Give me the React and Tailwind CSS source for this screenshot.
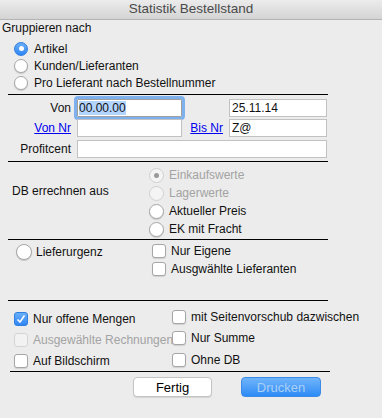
import React from "react";

const font = { fontFamily: '"Liberation Sans", Arial, sans-serif' };

const Radio = ({ checked, disabled, size = "w-[15px] h-[15px]" }) => (
  <span
    className={`${size} shrink-0 rounded-full flex items-center justify-center border ${
      checked && !disabled
        ? "bg-gradient-to-b from-[#68aef9] to-[#2f86f4] border-[#2f7fe0]"
        : disabled
        ? "bg-[#f4f4f4] border-[#d0d0d0]"
        : "bg-white border-[#a6a6a6] shadow-[0_1px_1px_rgba(0,0,0,0.15)]"
    }`}
  >
    {checked && (
      <span
        className={`w-[5px] h-[5px] rounded-full ${
          disabled ? "bg-[#9a9a9a]" : "bg-white"
        }`}
      />
    )}
  </span>
);

const Check = ({ checked, disabled }) => (
  <span
    className={`w-[14px] h-[14px] shrink-0 rounded-[3px] border flex items-center justify-center ${
      checked
        ? "bg-gradient-to-b from-[#68aef9] to-[#2f86f4] border-[#2f7fe0]"
        : disabled
        ? "bg-[#f2f2f2] border-[#d4d4d4]"
        : "bg-white border-[#a6a6a6] shadow-[0_1px_1px_rgba(0,0,0,0.12)]"
    }`}
  >
    {checked && (
      <svg width="10" height="10" viewBox="0 0 10 10">
        <path d="M1.5 5.5 L4 8 L8.5 1.5" fill="none" stroke="white" strokeWidth="1.5" />
      </svg>
    )}
  </span>
);

const Rule = ({ cls = "ml-[8px] w-[320px]" }) => <div className={`h-px bg-black ${cls}`} />;

export default function App() {
  return (
    <div style={font} className="w-[382px] h-[418px] bg-[#ececec] text-[12px] text-[#111] overflow-hidden">
      {/* title bar */}
      <div className="h-[20px] bg-gradient-to-b from-[#ececec] to-[#d4d4d4] border-b border-[#b4b4b4] flex items-center justify-center text-[13.5px] text-[#4a4a4a]">
        Statistik Bestellstand
      </div>

      {/* Gruppieren nach */}
      <div className="pl-[2px] h-[16px] leading-[16px]">Gruppieren nach</div>
      <div className="mt-[4px] pl-[14px] flex flex-col">
        {[
          ["Artikel", true],
          ["Kunden/Lieferanten", false],
          ["Pro Lieferant nach Bestellnummer", false],
        ].map(([t, c]) => (
          <div key={t} className="h-[17px] flex items-center gap-[6px]">
            <Radio checked={c} size="w-[14px] h-[14px]" />
            <span>{t}</span>
          </div>
        ))}
      </div>
      <div className="mt-[3px]">
        <Rule />
      </div>

      {/* form */}
      <div className="mt-[4px] flex flex-col">
        <div className="h-[18px] flex items-center">
          <span className="w-[71px] text-right">Von</span>
          <div className="ml-[6px] w-[105px] h-[18px] bg-white border border-[#a0a0a0] outline-[3px] outline outline-[#7eb0ee] rounded-[1px] flex items-center pl-[1px]">
            <span className="bg-[#b3d4fc] leading-[14px]">00.00.00</span>
          </div>
          <span className="w-[47px]" />
          <div className="w-[98px] h-[18px] bg-white border border-[#c2c2c2] flex items-center pl-[2px]">25.11.14</div>
        </div>
        <div className="mt-[2px] h-[18px] flex items-center">
          <span className="w-[71px] text-right text-[#0000ee] underline">Von Nr</span>
          <div className="ml-[6px] w-[105px] h-[18px] bg-white border border-[#c2c2c2]" />
          <span className="w-[47px] pr-[6px] text-right text-[#0000ee] underline">Bis Nr</span>
          <div className="w-[98px] h-[18px] bg-white border border-[#c2c2c2] flex items-center pl-[2px]">Z@</div>
        </div>
        <div className="mt-[3px] h-[18px] flex items-center">
          <span className="w-[71px] text-right">Profitcent</span>
          <div className="ml-[6px] w-[250px] h-[18px] bg-white border border-[#c2c2c2]" />
        </div>
      </div>
      <div className="mt-[3px]">
        <Rule />
      </div>

      {/* DB errechnen aus */}
      <div className="mt-[4px] flex">
        <div className="w-[149px] pl-[12px] pt-[17px] leading-[16px]">DB errechnen aus</div>
        <div className="flex flex-col">
          {[
            ["Einkaufswerte", true, true],
            ["Lagerwerte", false, true],
            ["Aktueller Preis", false, false],
            ["EK mit Fracht", false, false],
          ].map(([t, c, d]) => (
            <div key={t} className="h-[18px] flex items-center gap-[5px]">
              <Radio checked={c} disabled={d} />
              <span className={d ? "text-[#a3a3a3]" : ""}>{t}</span>
            </div>
          ))}
        </div>
      </div>
      <div className="mt-[1px]">
        <Rule />
      </div>

      {/* Lieferurgenz */}
      <div className="mt-[2px] flex">
        <div className="w-[152px] pl-[16px] h-[20px] flex items-center gap-[4px]">
          <Radio checked={false} size="w-[16px] h-[16px]" />
          <span>Lieferurgenz</span>
        </div>
        <div className="flex flex-col">
          {["Nur Eigene", "Ausgwählte Lieferanten"].map((t) => (
            <div key={t} className="h-[18px] flex items-center gap-[5px]">
              <Check />
              <span>{t}</span>
            </div>
          ))}
        </div>
      </div>
      <div className="mt-[22px]">
        <Rule />
      </div>

      {/* options */}
      <div className="mt-[7px] flex">
        <div className="w-[172px] pl-[14px] flex flex-col">
          {[
            ["Nur offene Mengen", true, false],
            ["Ausgewählte Rechnungen", false, true],
            ["Auf Bildschirm", false, false],
          ].map(([t, c, d]) => (
            <div key={t} className="h-[21px] flex items-center gap-[5px]">
              <Check checked={c} disabled={d} />
              <span className={`whitespace-nowrap ${d ? "text-[#a3a3a3]" : ""}`}>{t}</span>
            </div>
          ))}
        </div>
        <div className="-mt-[2px] flex flex-col">
          {["mit Seitenvorschub dazwischen", "Nur Summe", "Ohne DB"].map((t) => (
            <div key={t} className="h-[21.5px] flex items-center gap-[5px]">
              <Check />
              <span className="whitespace-nowrap">{t}</span>
            </div>
          ))}
        </div>
      </div>
      <Rule cls="ml-[10px] w-[320px]" />

      {/* buttons */}
      <div className="mt-[5px] flex">
        <button className="ml-[133px] w-[79px] h-[20px] bg-white border border-[#c4c4c4] rounded-[4px] shadow-[0_1px_1px_rgba(0,0,0,0.1)] text-[13px] text-black">
          Fertig
        </button>
        <button className="ml-[29px] w-[80px] h-[20px] rounded-[4px] bg-gradient-to-b from-[#6fb4fb] to-[#2b8bf5] border border-[#3a8ae6] text-[13px] text-[#a9cff6]">
          Drucken
        </button>
      </div>
    </div>
  );
}
